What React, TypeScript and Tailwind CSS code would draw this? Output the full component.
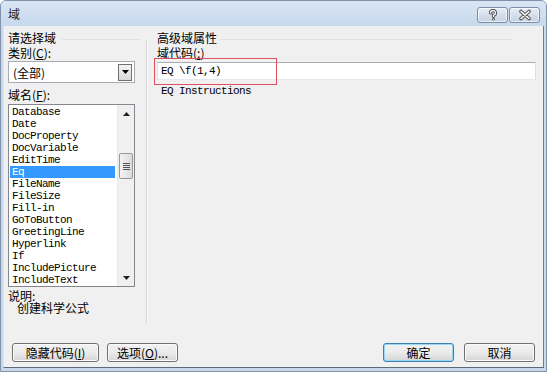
const FIELDS = [
  'Database',
  'Date',
  'DocProperty',
  'DocVariable',
  'EditTime',
  'Eq',
  'FileName',
  'FileSize',
  'Fill-in',
  'GoToButton',
  'GreetingLine',
  'Hyperlink',
  'If',
  'IncludePicture',
  'IncludeText',
];

const CJK = "font-['Noto_Sans_CJK_SC','Liberation_Sans',sans-serif]";
const MONO = "font-['Liberation_Mono','Noto_Sans_CJK_SC',monospace]";

function CaptionButton({ kind }: { kind: 'help' | 'close' }) {
  return (
    <div className="w-[31px] h-[16px] rounded-[3px] border border-[#7e8da3] bg-gradient-to-b from-[#e6edf6] to-[#c6d2e2] flex items-center justify-center shadow-[inset_0_0_0_1px_rgba(255,255,255,0.6)]">
      <svg width="14" height="12" viewBox="0 0 14 12">
        {kind === 'help' ? (
          <g fill="none" strokeLinecap="round">
            <path d="M4.5 4 a2.5 2.3 0 1 1 3 2.2 v1.3" stroke="#555" strokeWidth="3.2" />
            <circle cx="7.5" cy="10.2" r="1.3" fill="#555" />
            <path d="M4.5 4 a2.5 2.3 0 1 1 3 2.2 v1.3" stroke="#fff" strokeWidth="1.2" />
            <circle cx="7.5" cy="10.2" r="0.5" fill="#fff" />
          </g>
        ) : (
          <g strokeLinecap="round">
            <path d="M3 2.5 L11 9.5 M11 2.5 L3 9.5" stroke="#555" strokeWidth="3.6" />
            <path d="M3 2.5 L11 9.5 M11 2.5 L3 9.5" stroke="#fff" strokeWidth="1.6" />
          </g>
        )}
      </svg>
    </div>
  );
}

function Mn({ children }: { children: string }) {
  return <span className="underline underline-offset-[1px]">{children}</span>;
}

function Button({ children, w, primary }: { children: React.ReactNode; w: string; primary?: boolean }) {
  return (
    <div
      className={`${w} h-[19px] rounded-[3px] border ${
        primary ? 'border-[#3c7fb1] shadow-[inset_0_0_0_1px_#9ad6f5]' : 'border-[#707070] shadow-[inset_0_0_0_1px_#fbfbfb]'
      } bg-gradient-to-b from-[#f2f2f2] via-[#ebebeb] to-[#d6d6d6] flex items-center justify-center text-[12px] leading-[15px] text-black`}
    >
      {children}
    </div>
  );
}

function Scrollbar() {
  return (
    <div className="w-[17px] h-full bg-[#f0f0f0] border-l border-[#e8e8e8] flex flex-col">
      <div className="h-[17px] flex items-center justify-center">
        <svg width="7" height="4" viewBox="0 0 7 4"><path d="M0 4 L3.5 0 L7 4 Z" fill="#222" /></svg>
      </div>
      <div className="h-[31px]" />
      <div className="mx-[1px] h-[26px] rounded-[2px] border border-[#979797] bg-gradient-to-r from-[#f3f3f3] to-[#dcdcdc] flex flex-col items-center justify-center gap-[1px]">
        <div className="w-[7px] h-[1px] bg-[#555]" />
        <div className="w-[7px] h-[1px] bg-[#555]" />
        <div className="w-[7px] h-[1px] bg-[#555]" />
        <div className="w-[7px] h-[1px] bg-[#555]" />
      </div>
      <div className="flex-1" />
      <div className="h-[17px] flex items-center justify-center">
        <svg width="7" height="4" viewBox="0 0 7 4"><path d="M0 0 L3.5 4 L7 0 Z" fill="#222" /></svg>
      </div>
    </div>
  );
}

export default function App() {
  return (
    <div className={`w-[547px] h-[372px] bg-white ${CJK} text-black`}>
      <div className="w-[547px] h-[372px] flex flex-col rounded-t-[6px] border border-[#8193ab] bg-[#c9d8eb] overflow-hidden">
        {/* title bar */}
        <div className="h-[25px] flex items-start bg-gradient-to-b from-[#dae6f5] to-[#c7d8ed] pl-[7px] pr-[6px]">
          <div className="mt-[5px] text-[12px] leading-[15px] text-[#222]">域</div>
          <div className="ml-auto mt-[6px] flex gap-[1px]">
            <CaptionButton kind="help" />
            <CaptionButton kind="close" />
          </div>
        </div>

        {/* client area */}
        <div className="flex-1 flex pl-[2px] pr-[2px] pb-[3px]">
          <div className="flex-1 flex flex-col bg-[#f0f0f0] border-l border-[#dfe4ea] border-r border-r-[#6f7c8c] border-b border-b-[#5e6a78] pt-[4px] pl-[4px]">
            <div className="flex">
              {/* left column */}
              <div className="w-[127px] flex flex-col">
                <div className="h-[15px] flex items-center text-[12px] leading-[15px]">
                  <span>请选择域</span>
                  <div className="ml-[6px] mr-[-6px] flex-1 h-[1px] bg-[#e2e2e2] mt-[3px]" />
                </div>
                <div className="h-[15px] text-[12px] leading-[15px]">
                  类别(<Mn>C</Mn>):
                </div>
                <div className="mt-[1px] h-[22px] bg-white border border-[#a5acb5] flex items-center pl-[4px] pr-[2px]">
                  <span className="text-[12px] leading-[15px]">(全部)</span>
                  <div className="ml-auto w-[14px] h-[17px] border border-[#707070] bg-gradient-to-b from-[#f4f4f4] to-[#d8d8d8] flex items-center justify-center">
                    <svg width="7" height="4" viewBox="0 0 7 4"><path d="M0 0 L3.5 4 L7 0 Z" fill="#000" /></svg>
                  </div>
                </div>
                <div className="mt-[4px] h-[15px] text-[12px] leading-[15px]">
                  域名(<Mn>F</Mn>):
                </div>
                <div className="mt-[2px] h-[183px] bg-white border border-[#828790] flex overflow-hidden">
                  <div className={`flex-1 pt-[1px] pl-[1px] pr-[2px] ${MONO} text-[11px] leading-[12px] tracking-[-0.6px]`}>
                    {FIELDS.map((f) => (
                      <div
                        key={f}
                        className={`h-[12px] pl-[2px] whitespace-nowrap ${f === 'Eq' ? 'bg-[#3399ff] text-white' : 'text-black'}`}
                      >
                        {f}
                      </div>
                    ))}
                  </div>
                  <Scrollbar />
                </div>
                <div className="mt-[3px] text-[12px] leading-[12px]">说明:</div>
                <div className="pl-[9px] text-[12px] leading-[12px]">创建科学公式</div>
              </div>

              {/* separator */}
              <div className="ml-[11px] mt-[10px] w-[1px] h-[282px] bg-[#d5d5d5] shadow-[1px_0_0_#fbfbfb]" />

              {/* right column */}
              <div className="ml-[10px] w-[379px] flex flex-col relative">
                <div className="h-[15px] flex items-center text-[12px] leading-[15px]">
                  <span>高级域属性</span>
                  <div className="ml-[3px] w-[292px] h-[1px] bg-[#e2e2e2] mt-[3px]" />
                </div>
                <div className="h-[15px] text-[12px] leading-[15px]">
                  域代码(<Mn>:</Mn>)
                </div>
                <div className="mt-[2px] h-[18px] bg-white border border-[#abadb3] border-l-[#e2e3ea] border-r-[#dbdfe6] border-b-[#e3e9ef] flex items-center pl-[3px]">
                  <span className={`${MONO} text-[11px] leading-[12px] tracking-[-0.6px]`}>EQ \f(1,4)</span>
                </div>
                <div className={`mt-[5px] pl-[4px] ${MONO} text-[11px] leading-[12px] tracking-[-0.6px]`}>EQ Instructions</div>
                {/* annotation box */}
                <div className="absolute left-[-3px] top-[28px] w-[123px] h-[27px] border-[1.5px] border-[#e0505c]" />
              </div>
            </div>

            <div className="flex-1" />

            {/* bottom buttons */}
            <div className="flex items-center pl-[4px] pr-[8px] pb-[5px]">
              <Button w="w-[87px]">
                隐藏代码(<Mn>I</Mn>)
              </Button>
              <div className="ml-[8px]">
                <Button w="w-[71px]">
                  选项(<Mn>O</Mn>)...
                </Button>
              </div>
              <div className="ml-auto flex gap-[10px]">
                <Button w="w-[71px]" primary>
                  确定
                </Button>
                <Button w="w-[71px]">取消</Button>
              </div>
            </div>
          </div>
        </div>
      </div>
    </div>
  );
}
